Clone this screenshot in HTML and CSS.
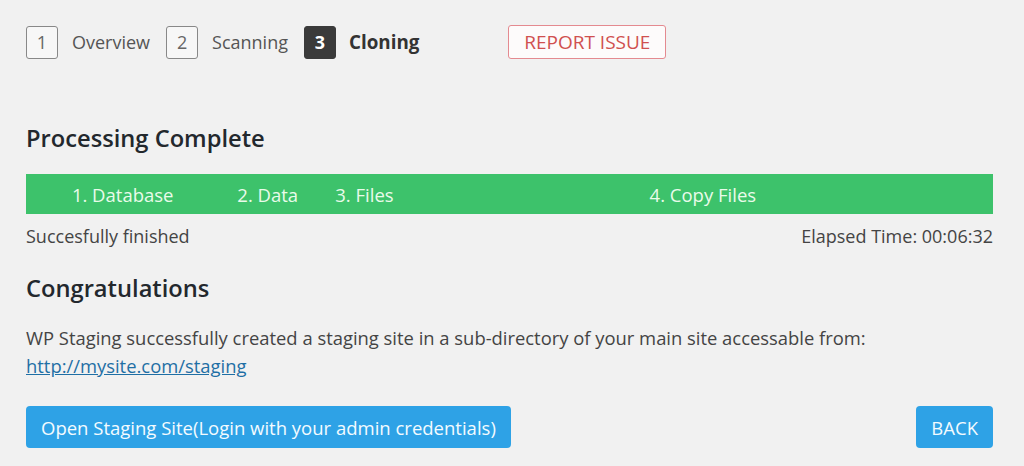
FILE: index.html
```html
<!DOCTYPE html>
<html>
<head>
<meta charset="utf-8">
<link rel="stylesheet" href="styles.css">
</head>
<body>
<div class="page">
  <div class="steps">
    <span class="num">1</span><span class="label">Overview</span>
    <span class="num">2</span><span class="label">Scanning</span>
    <span class="num active">3</span><span class="label active">Cloning</span>
    <a class="report">REPORT ISSUE</a>
  </div>

  <h2 class="title">Processing Complete</h2>

  <div class="bar">
    <div class="seg" style="width:20%">1. Database</div>
    <div class="seg" style="width:10%">2. Data</div>
    <div class="seg" style="width:10%">3. Files</div>
    <div class="seg" style="width:60%">4. Copy Files</div>
  </div>
  <div class="status">
    <span>Succesfully finished</span>
    <span>Elapsed Time: 00:06:32</span>
  </div>

  <h2 class="title congrats">Congratulations</h2>
  <p class="msg">WP Staging successfully created a staging site in a sub-directory of your main site accessable from:<br><a class="link" href="#">http://mysite.com/staging</a></p>

  <div class="actions">
    <a class="btn">Open Staging Site(Login with your admin credentials)</a>
    <a class="btn">BACK</a>
  </div>
</div>
</body>
</html>
```
FILE: styles.css
```css
html, body {
  margin: 0;
  padding: 0;
  background: #f1f1f1;
}
body {
  font-family: "Open Sans", "Noto Sans", sans-serif;
  color: #3c3c3c;
}
.page {
  width: 967px;
  padding: 25px 0 0 26px;
}
.steps {
  display: flex;
  align-items: center;
  height: 34px;
  font-size: 18px;
}
.num {
  box-sizing: border-box;
  width: 32px;
  height: 33px;
  border: 1px solid #888;
  border-radius: 3px;
  display: flex;
  align-items: center;
  justify-content: center;
  color: #666;
  background: #f7f7f7;
}
.num.active {
  background: #3a3a3a;
  border-color: #3a3a3a;
  color: #fff;
  font-weight: 700;
}
.label {
  margin: 0 16px 0 14px;
  color: #555;
}
.label.active {
  color: #333;
  font-weight: 700;
  font-size: 18.8px;
  margin-left: 13px;
  margin-right: 89px;
}
.report {
  box-sizing: border-box;
  height: 34px;
  width: 158px;
  border: 1px solid #e48a90;
  border-radius: 3px;
  background: #fdfbfb;
  color: #d0504f;
  display: flex;
  align-items: center;
  justify-content: center;
  font-size: 19px;
}
.title {
  margin: 63px 0 0 0;
  font-size: 23.7px;
  font-weight: 600;
  color: #23282d;
  line-height: 32px;
}
.bar {
  display: flex;
  margin-top: 20px;
  height: 40px;
  background: #3dc26b;
}
.seg {
  display: flex;
  align-items: center;
  justify-content: center;
  color: #e9fbea;
  font-size: 18.5px;
}
.status {
  display: flex;
  justify-content: space-between;
  margin-top: 10px;
  font-size: 18px;
  color: #444;
  line-height: 24px;
}
.congrats {
  margin-top: 24px;
}
.msg {
  margin: 20px 0 0 0;
  font-size: 18.4px;
  line-height: 28px;
  color: #444;
}
.link {
  color: #1f6fa5;
  text-decoration: underline;
}
.actions {
  display: flex;
  justify-content: space-between;
  margin-top: 26px;
}
.btn {
  box-sizing: border-box;
  height: 42px;
  padding: 0 15px;
  background: #2ea2e6;
  color: #f3fbff;
  border-radius: 4px;
  display: flex;
  align-items: center;
  font-size: 18.5px;
}
```
